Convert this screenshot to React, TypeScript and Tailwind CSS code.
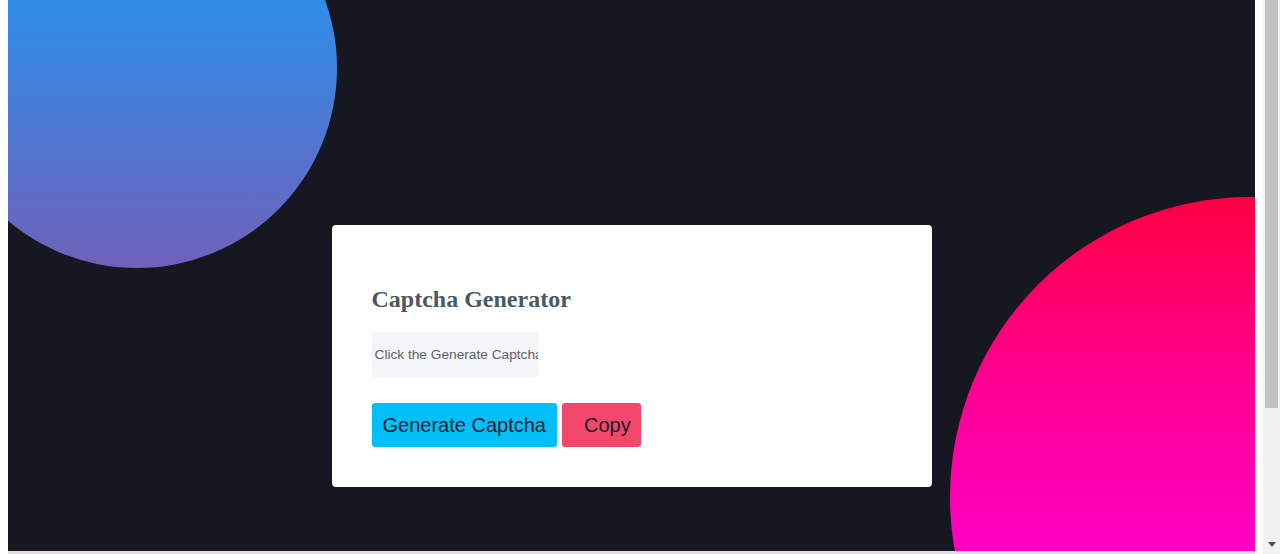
export default function App() {
  return (
    <div className="flex h-[554px] w-[1280px] overflow-hidden bg-white font-['Liberation_Sans',Arial,sans-serif]">
      {/* page with body margin */}
      <div className="flex flex-1 flex-col px-2">
        <main className="relative h-[551px] overflow-hidden bg-[#171722]">
          {/* decorative circles */}
          <div className="absolute left-[-71px] top-[-132px] h-[400px] w-[400px] rounded-full bg-[linear-gradient(to_bottom,#0fa3ff,#6f61ba)]" />
          <div className="absolute left-[942px] top-[197px] h-[600px] w-[600px] rounded-full bg-[linear-gradient(to_bottom,#ff0042_0%,#ff0090_30%,#ff00c8_60%,#ff00f0_100%)]" />

          <div className="relative z-10 flex justify-center pt-[225px]">
            <div className="w-[600px] rounded bg-white px-10 pb-10 pt-[58px]">
              <h2 className="font-['Liberation_Serif','Times_New_Roman',serif] text-2xl font-bold leading-8 text-[#4a5866]">
                Captcha Generator
              </h2>
              <input
                readOnly
                value="Click the Generate Captcha"
                className="mt-[17px] h-[45px] w-[166px] bg-[#f4f5f9] pl-[3px] pr-0 font-['Liberation_Sans',Arial,sans-serif] text-[13.7px] text-[#5f5f66] outline-none"
              />
              <div className="mt-[26px] flex gap-[5px]">
                <button className="h-[44px] rounded-[3px] bg-[#00bff9] pl-[11px] pr-[11px] text-xl text-[#1b1b2c]">
                  Generate Captcha
                </button>
                <button className="h-[44px] rounded-[3px] bg-[#f0476a] pl-[22px] pr-[10px] text-xl text-[#1b1b2c]">
                  Copy
                </button>
              </div>
            </div>
          </div>
        </main>
        <div className="h-[3px] bg-[#e8dddd]" />
      </div>

      {/* scrollbar */}
      <div className="flex w-[17px] flex-col bg-[#f1f1f1]">
        <div className="mx-[2px] h-[408px] bg-[#c3c3c3]" />
        <div className="flex-1" />
        <div className="flex h-[17px] items-center justify-center pb-[3px]">
          <svg width="8" height="5" viewBox="0 0 8 5">
            <path d="M0 0h8L4 5z" fill="#505050" />
          </svg>
        </div>
      </div>
    </div>
  );
}
